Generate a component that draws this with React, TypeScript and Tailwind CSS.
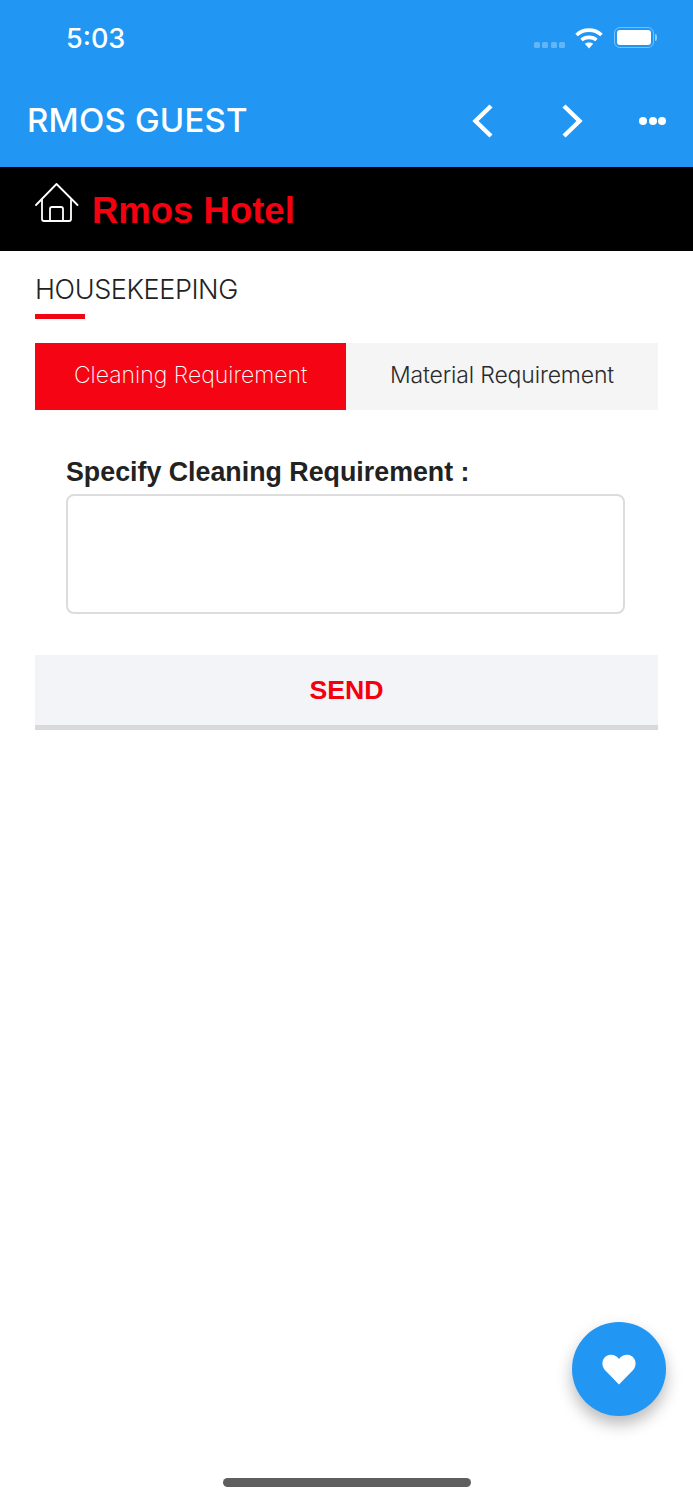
const StatusBar = () => (
  <div className="flex h-[76px] items-start bg-[#2196f3] pl-[66px] pr-[36px] text-white">
    <span className="mt-[22px] font-['Inter',sans-serif] text-[27px] leading-[34px] font-medium">5:03</span>
    <div className="ml-auto flex items-start">
      <div className="mt-[42px] flex gap-[2.5px]">
        <span className="h-[6px] w-[6px] rounded-[1.5px] bg-white/30" />
        <span className="h-[6px] w-[6px] rounded-[1.5px] bg-white/30" />
        <span className="h-[6px] w-[6px] rounded-[1.5px] bg-white/30" />
        <span className="h-[6px] w-[6px] rounded-[1.5px] bg-white/30" />
      </div>
      <svg className="mt-[27px] ml-[10px]" width="28" height="22" viewBox="0 0 28 22" fill="none" stroke="white" strokeWidth="3.6">
        <path d="M1.5 8 C8.5 1.5 19.5 1.5 26.5 8" />
        <path d="M6.5 13 C10.5 9.5 17.5 9.5 21.5 13" />
        <path d="M14 21.5 L9.8 16.8 C12 15 16 15 18.2 16.8 Z" fill="white" stroke="none" />
      </svg>
      <div className="mt-[27px] ml-[11px] flex items-center">
        <div className="h-[21px] w-[40px] rounded-[6px] border-[1.5px] border-white/40 p-[2px]">
          <div className="h-full w-full rounded-[3px] bg-white" />
        </div>
        <span className="ml-[1px] h-[7px] w-[2px] rounded-r-full bg-white/50" />
      </div>
    </div>
  </div>
);

const Toolbar = () => (
  <div className="flex h-[91px] items-center bg-[#2196f3] pb-[2px] pl-[27px] text-white">
    <span className="font-['Inter',sans-serif] text-[33px] leading-none font-medium tracking-[0.2px]">RMOS GUEST</span>
    <svg className="ml-auto" width="22" height="34" viewBox="0 0 22 34" fill="none" stroke="white" strokeWidth="4.4">
      <path d="M19 2 L3.5 17 L19 32" />
    </svg>
    <svg className="ml-[67px]" width="22" height="34" viewBox="0 0 22 34" fill="none" stroke="white" strokeWidth="4.4">
      <path d="M3 2 L18.5 17 L3 32" />
    </svg>
    <div className="mr-[27px] ml-[56px] flex gap-[1.5px]">
      <span className="h-[8px] w-[8px] rounded-full bg-white" />
      <span className="h-[8px] w-[8px] rounded-full bg-white" />
      <span className="h-[8px] w-[8px] rounded-full bg-white" />
    </div>
  </div>
);

const HotelBar = () => (
  <div className="flex h-[84px] items-start bg-black pl-[35px]">
    <svg className="mt-[15px]" width="44" height="42" viewBox="0 0 44 42" fill="none" stroke="white" strokeWidth="1.8" strokeLinecap="round" strokeLinejoin="round">
      <path d="M1 23 L21.5 2 L42.5 23" />
      <path d="M7 18 V37 Q7 39 9 39 H34 Q36 39 36 37 V18" />
      <path d="M15 39 V27 Q15 25 17 25 H26 Q28 25 28 27 V39" />
    </svg>
    <span className="mt-[22px] ml-[13px] font-['Liberation_Sans',Arial,sans-serif] text-[36.5px] leading-[44px] font-bold text-[#f5000f]">Rmos Hotel</span>
  </div>
);

const App = () => {
  return (
    <div className="relative h-[1500px] w-[693px] overflow-hidden bg-white font-['Liberation_Sans',Arial,sans-serif]">
      <StatusBar />
      <Toolbar />
      <HotelBar />

      <div className="px-[35px]">
        <h2 className="mt-[23px] font-['Inter',sans-serif] text-[27px] leading-[32px] font-light tracking-[-0.4px] text-[#222]">HOUSEKEEPING</h2>
        <div className="mt-[8px] h-[5px] w-[50px] bg-[#f20512]" />

        <div className="mt-[24px] flex h-[67px]">
          <div className="flex w-[311px] items-center justify-center bg-[#f50513] pb-[3px] font-['Inter',sans-serif] text-[23px] font-extralight text-white">Cleaning Requirement</div>
          <div className="flex flex-1 items-center justify-center bg-[#f5f5f5] pb-[3px] font-['Inter',sans-serif] text-[23px] font-light tracking-[-0.15px] text-[#2b2b2b]">Material Requirement</div>
        </div>

        <div className="mt-[46px] pr-[33px] pl-[31px]">
          <label className="block text-[26.8px] leading-[32px] font-bold text-[#222]">Specify Cleaning Requirement :</label>
          <div className="mt-[6px] h-[120px] rounded-[8px] border-2 border-[#dcdcdc] bg-white" />
        </div>

        <button className="mt-[41px] block h-[75px] w-full border-b-[5px] border-[#d9d9dc] bg-[#f3f4f8] text-[26.7px] font-bold text-[#f5000f]">SEND</button>
      </div>

      <button className="absolute top-[1322px] left-[572px] flex h-[94px] w-[94px] items-center justify-center rounded-full bg-[#2196f3] shadow-[0_8px_16px_rgba(0,0,0,0.28)]">
        <svg width="34" height="31" viewBox="0 0 36 32" fill="white">
          <path d="M18 32 L3 16.5 C-2 11 0.5 1 9 0.5 C13 0.3 16 2.2 18 5 C20 2.2 23 0.3 27 0.5 C35.5 1 38 11 33 16.5 Z" />
        </svg>
      </button>

      <div className="absolute top-[1478px] left-[223px] h-[9px] w-[248px] rounded-full bg-[#5f5f5f]" />
    </div>
  );
};

export default App;
